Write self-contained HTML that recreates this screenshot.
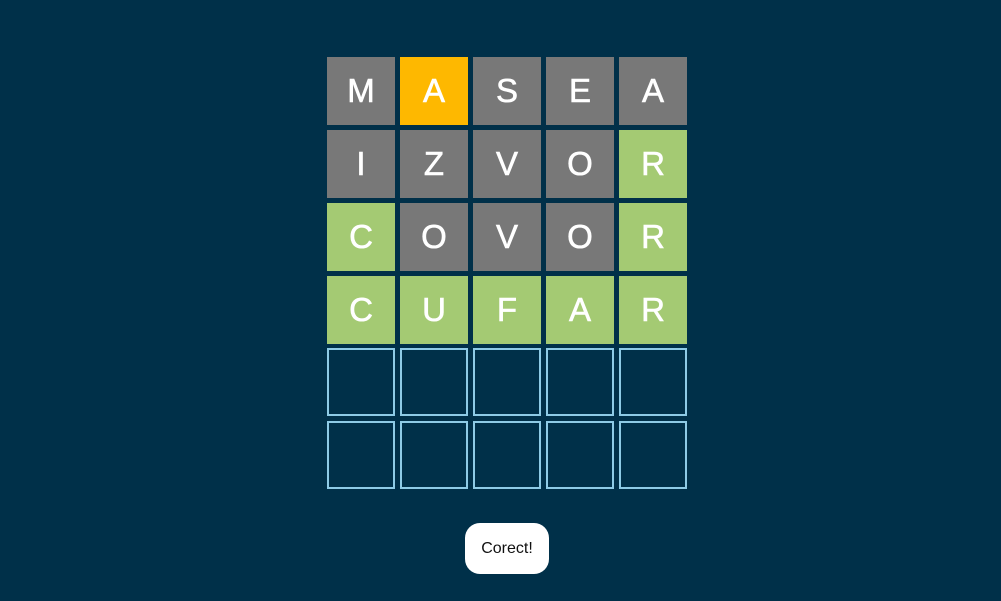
<!DOCTYPE html>
<html><head><meta charset="utf-8"><style>
html,body{margin:0;padding:0;width:1001px;height:601px;background:#003049;overflow:hidden;font-family:"Liberation Sans",sans-serif}
.t{position:absolute;width:68px;height:68px;box-sizing:border-box;display:flex;align-items:center;justify-content:center;color:#fff;font-size:33px;font-weight:normal;-webkit-text-stroke:0.6px #fff}
.g{background:#787878}.y{background:#feb800}.v{background:#a4ca73}
.e{border:2px solid #8ecbe6}
.toast{position:absolute;left:465px;top:523px;width:84px;height:51px;background:#fff;border-radius:15px;display:flex;align-items:center;justify-content:center;font-size:16px;color:#111}
</style></head><body>
<div id="b"></div>
<div class="toast">Corect!</div>
<script>
var rows=[["M","g","A","y","S","g","E","g","A","g"],["I","g","Z","g","V","g","O","g","R","v"],["C","v","O","g","V","g","O","g","R","v"],["C","v","U","v","F","v","A","v","R","v"]];
var h="";
for(var r=0;r<6;r++)for(var c=0;c<5;c++){
var x=327+c*73,y=57+r*73;
if(r<4)h+='<div class="t '+rows[r][c*2+1]+'" style="left:'+x+'px;top:'+y+'px">'+rows[r][c*2]+'</div>';
else h+='<div class="t e" style="left:'+x+'px;top:'+(y-1)+'px"></div>';}
document.getElementById("b").innerHTML=h;
</script>
</body></html>
